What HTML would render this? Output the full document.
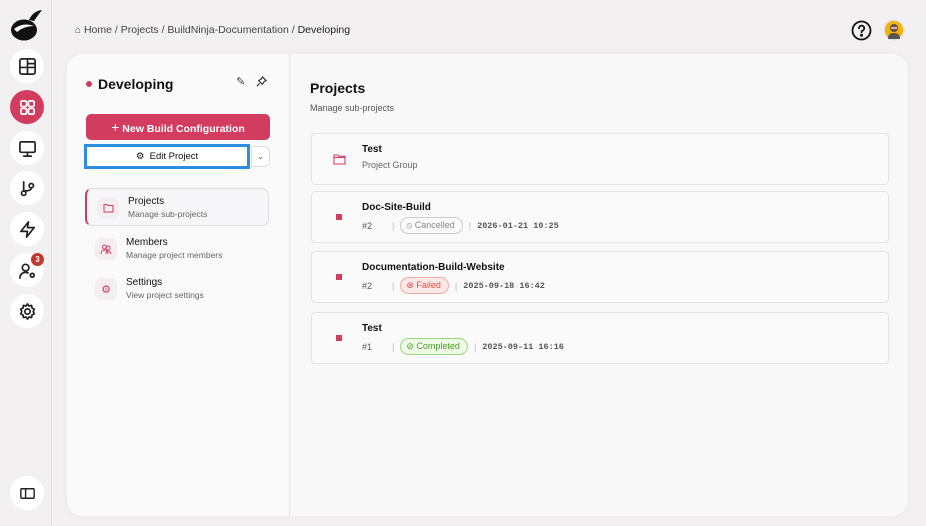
<!DOCTYPE html>
<html><head><meta charset="utf-8"><style>
*{box-sizing:border-box;margin:0;padding:0}
body{width:926px;height:526px;overflow:hidden;background:#f2f0f1;font-family:"Liberation Sans",sans-serif;position:relative;color:#111}
.side{position:absolute;left:0;top:0;width:52px;height:526px;background:#f2f0f1;border-right:1px solid #e4e2e3}
.ic{position:absolute;left:10px;width:34px;height:34px;border-radius:50%;background:#fff;display:flex;align-items:center;justify-content:center}
.ic svg{width:19px;height:19px;fill:none;stroke:#222;stroke-width:1.8;stroke-linecap:round;stroke-linejoin:round}
.card{position:absolute;left:67px;top:54px;width:841px;height:462px;border-radius:16px;background:#f8f8f9;overflow:hidden;box-shadow:0 0 8px rgba(0,0,0,.04)}
.left{position:absolute;left:0;top:0;width:223px;height:100%;background:#fafafa;border-right:1px solid #e6e6e6}
.bc{position:absolute;left:75px;top:24px;font-size:10.5px;color:#444}
.row{position:absolute;left:244px;width:578px;height:52px;background:#fafafb;border:1px solid #e5e5e5;border-radius:4px}
.row .t{position:absolute;left:50px;top:10px;font-size:10px;font-weight:bold}
.row .sq{position:absolute;left:24px;top:22px;width:6px;height:6px;background:#d23c5f}
.meta{position:absolute;left:50px;top:25px;font-size:9px;color:#555;display:flex;align-items:center;height:17px}
.pill{border-radius:9px;height:17px;padding:0 7px 0 5px;display:flex;align-items:center;gap:4px;font-size:9px}
.mono{font-family:"Liberation Mono",monospace;font-size:8.5px;color:#555;font-weight:bold}
.sep{color:#bbb;margin:0 6px}
.nav{position:absolute;left:18px;width:184px;height:38px}
.nav .b{position:absolute;left:10px;top:8px;width:22px;height:22px;border-radius:6px;background:#f4eef0;display:flex;align-items:center;justify-content:center}
.nav .h{position:absolute;left:41px;top:7px;font-size:10px}
.nav .s{position:absolute;left:41px;top:20px;font-size:8.5px;color:#666}
</style></head><body>
<div class="side">
 <svg style="position:absolute;left:10px;top:7px" width="34" height="36" viewBox="0 0 34 36"><ellipse cx="14" cy="23" rx="13" ry="10.5" fill="#111"/><path d="M4 22 Q13 15 24 19 Q14 19 7 25Z" fill="#fff"/><path d="M19 13 Q23 4 32 3 Q28 8 24 14Z" fill="#111"/></svg>
 <div class="ic" style="top:49px"><svg viewBox="0 0 20 20"><rect x="2" y="2" width="16" height="16" rx="2"/><path d="M2 11h16M10 2v16M10 7h8"/></svg></div>
 <div class="ic" style="top:90px;background:#d23c5f"><svg viewBox="0 0 20 20" style="stroke:#fff"><rect x="3" y="3" width="6" height="6" rx="1.5"/><rect x="11" y="3" width="6" height="6" rx="1.5"/><rect x="3" y="11" width="6" height="6" rx="1.5"/><rect x="11" y="11" width="6" height="6" rx="1.5"/></svg></div>
 <div class="ic" style="top:131px"><svg viewBox="0 0 20 20"><rect x="2" y="3" width="16" height="11" rx="1.5"/><path d="M10 14v4M6 18h8"/></svg></div>
 <div class="ic" style="top:171px"><svg viewBox="0 0 20 20"><circle cx="6" cy="15" r="2.3"/><circle cx="14" cy="7" r="2.3"/><path d="M6 3v9.7M14 9.3c0 4-8 3-8 3.4"/></svg></div>
 <div class="ic" style="top:212px"><svg viewBox="0 0 20 20"><path d="M11 2 3 12h7l-1 6 8-10h-7z"/></svg></div>
 <div class="ic" style="top:253px"><svg viewBox="0 0 20 20"><circle cx="8" cy="7" r="3.5"/><path d="M2 18c0-4 3-6 6-6 1.5 0 2 .3 2.5.6"/><circle cx="15" cy="15" r="2"/></svg></div>
 <div style="position:absolute;left:31px;top:253px;width:13px;height:13px;border-radius:50%;background:#c0392b;color:#fff;font-size:8px;font-weight:bold;text-align:center;line-height:13px">3</div>
 <div class="ic" style="top:294px"><svg viewBox="0 0 20 20"><circle cx="10" cy="10" r="2.8"/><path d="M10 2l1.6 2.2 2.7-.6.4 2.7 2.5 1.2-1.2 2.5 1.2 2.5-2.5 1.2-.4 2.7-2.7-.6L10 18l-1.6-2.2-2.7.6-.4-2.7-2.5-1.2L4 10 2.8 7.5l2.5-1.2.4-2.7 2.7.6z"/></svg></div>
 <div class="ic" style="top:476px"><svg viewBox="0 0 20 20" style="stroke-width:1.5"><rect x="3" y="5" width="14" height="10" rx="1"/><path d="M8 5v10"/></svg></div>
</div>
<div class="bc"><span style="font-size:10px">⌂</span> Home / Projects / BuildNinja-Documentation / <span style="color:#222">Developing</span></div>
<svg style="position:absolute;left:851px;top:20px" width="21" height="21" viewBox="0 0 21 21" fill="none" stroke="#111" stroke-width="1.8"><circle cx="10.5" cy="10.5" r="9"/><path d="M8 8.3a2.6 2.6 0 1 1 3.5 2.4c-.8.4-1 .9-1 1.7" stroke-linecap="round"/><circle cx="10.5" cy="15.3" r=".6" fill="#111"/></svg>
<svg style="position:absolute;left:883px;top:19px" width="22" height="22" viewBox="0 0 22 22"><circle cx="11" cy="11" r="10.5" fill="#e0e0e0"/><circle cx="11" cy="11" r="9" fill="#f2b200"/><path d="M5 20c0-5 3-6 6-6s6 1 6 6z" fill="#555"/><circle cx="11" cy="9" r="4" fill="#555"/><rect x="8" y="8" width="6" height="2" fill="#f4a6a0"/></svg>
<div class="card">
 <div class="left">
  <div style="position:absolute;left:19px;top:27px;width:6px;height:6px;border-radius:50%;background:#d23c5f"></div>
  <div style="position:absolute;left:31px;top:22px;font-size:14px;font-weight:bold">Developing</div>
  <div style="position:absolute;left:169px;top:21px;font-size:11px;color:#444">✎</div>
  <svg style="position:absolute;left:189px;top:22px" width="11" height="11" viewBox="0 0 12 12" fill="none" stroke="#222" stroke-width="1.2"><path d="M7 1l4 4-2 1-2 3-4-4 3-2zM4 8l-3 3"/></svg>
  <div style="position:absolute;left:19px;top:60px;width:184px;height:26px;background:#d23c5f;border-radius:5px;color:#fff;font-size:10.5px;font-weight:bold;text-align:center;line-height:26px"><span style="font-size:14px;font-weight:normal">+</span> New Build Configuration</div>
  <div style="position:absolute;left:17px;top:90px;width:166px;height:25px;border:3px solid #2d8de0;background:#fff;font-size:9.5px;text-align:center;line-height:19px">⚙&nbsp; Edit Project</div>
  <div style="position:absolute;left:184px;top:92px;width:19px;height:21px;border:1px solid #ddd;border-radius:0 6px 6px 0;background:#fff;font-size:8px;text-align:center;line-height:19px;color:#555">⌄</div>
  <div class="nav" style="top:134px;border:1px solid #ddd;border-left:2px solid #d23c5f;border-radius:7px;background:#f7f7f9"><div class="b"><svg width="11" height="10" viewBox="0 0 11 10" fill="none" stroke="#d23c5f"><path d="M1 1.5h3l1 1h5v6.5H1z"/></svg></div><div class="h" style="left:41px">Projects</div><div class="s">Manage sub-projects</div></div>
  <div class="nav" style="top:176px"><div class="b" style="left:10px"><svg width="12" height="12" viewBox="0 0 12 12" fill="none" stroke="#d23c5f"><circle cx="4.5" cy="4" r="2"/><circle cx="8" cy="5" r="2"/><path d="M1 11c0-3 2-4 3.5-4S8 8 8 11M6 11c0-2 1-3 2-3s3 1 3 3"/></svg></div><div class="h" style="left:41px">Members</div><div class="s">Manage project members</div></div>
  <div class="nav" style="top:216px"><div class="b"><span style="color:#d23c5f;font-size:11px">⚙</span></div><div class="h">Settings</div><div class="s">View project settings</div></div>
 </div>
 <div style="position:absolute;left:243px;top:26px;font-size:14px;font-weight:bold">Projects</div>
 <div style="position:absolute;left:243px;top:49px;font-size:9px;color:#555">Manage sub-projects</div>
 <div class="row" style="top:79px"><svg style="position:absolute;left:21px;top:20px" width="13" height="11" viewBox="0 0 13 11" fill="none" stroke="#d23c5f" stroke-width="1.1"><path d="M1 1h4l1 1.3h6V10H1z M1 3.5h11"/></svg><div class="t">Test</div><div class="meta" style="top:22px;color:#666">Project Group</div></div>
 <div class="row" style="top:137px"><div class="sq"></div><div class="t">Doc-Site-Build</div><div class="meta">#2<span class="sep" style="margin-left:20px">|</span><span class="pill" style="border:1px solid #ccc;color:#888">⦸ Cancelled</span><span class="sep">|</span><span class="mono">2026-01-21 10:25</span></div></div>
 <div class="row" style="top:197px"><div class="sq"></div><div class="t">Documentation-Build-Website</div><div class="meta">#2<span class="sep" style="margin-left:20px">|</span><span class="pill" style="border:1px solid #f4a9a9;background:#fde8e8;color:#e24b4b">⊗ Failed</span><span class="sep">|</span><span class="mono">2025-09-18 16:42</span></div></div>
 <div class="row" style="top:258px"><div class="sq"></div><div class="t">Test</div><div class="meta">#1<span class="sep" style="margin-left:20px">|</span><span class="pill" style="border:1px solid #9bd67a;background:#eefbe6;color:#4a9e2a">⊘ Completed</span><span class="sep">|</span><span class="mono">2025-09-11 16:16</span></div></div>
</div>
</body></html>
